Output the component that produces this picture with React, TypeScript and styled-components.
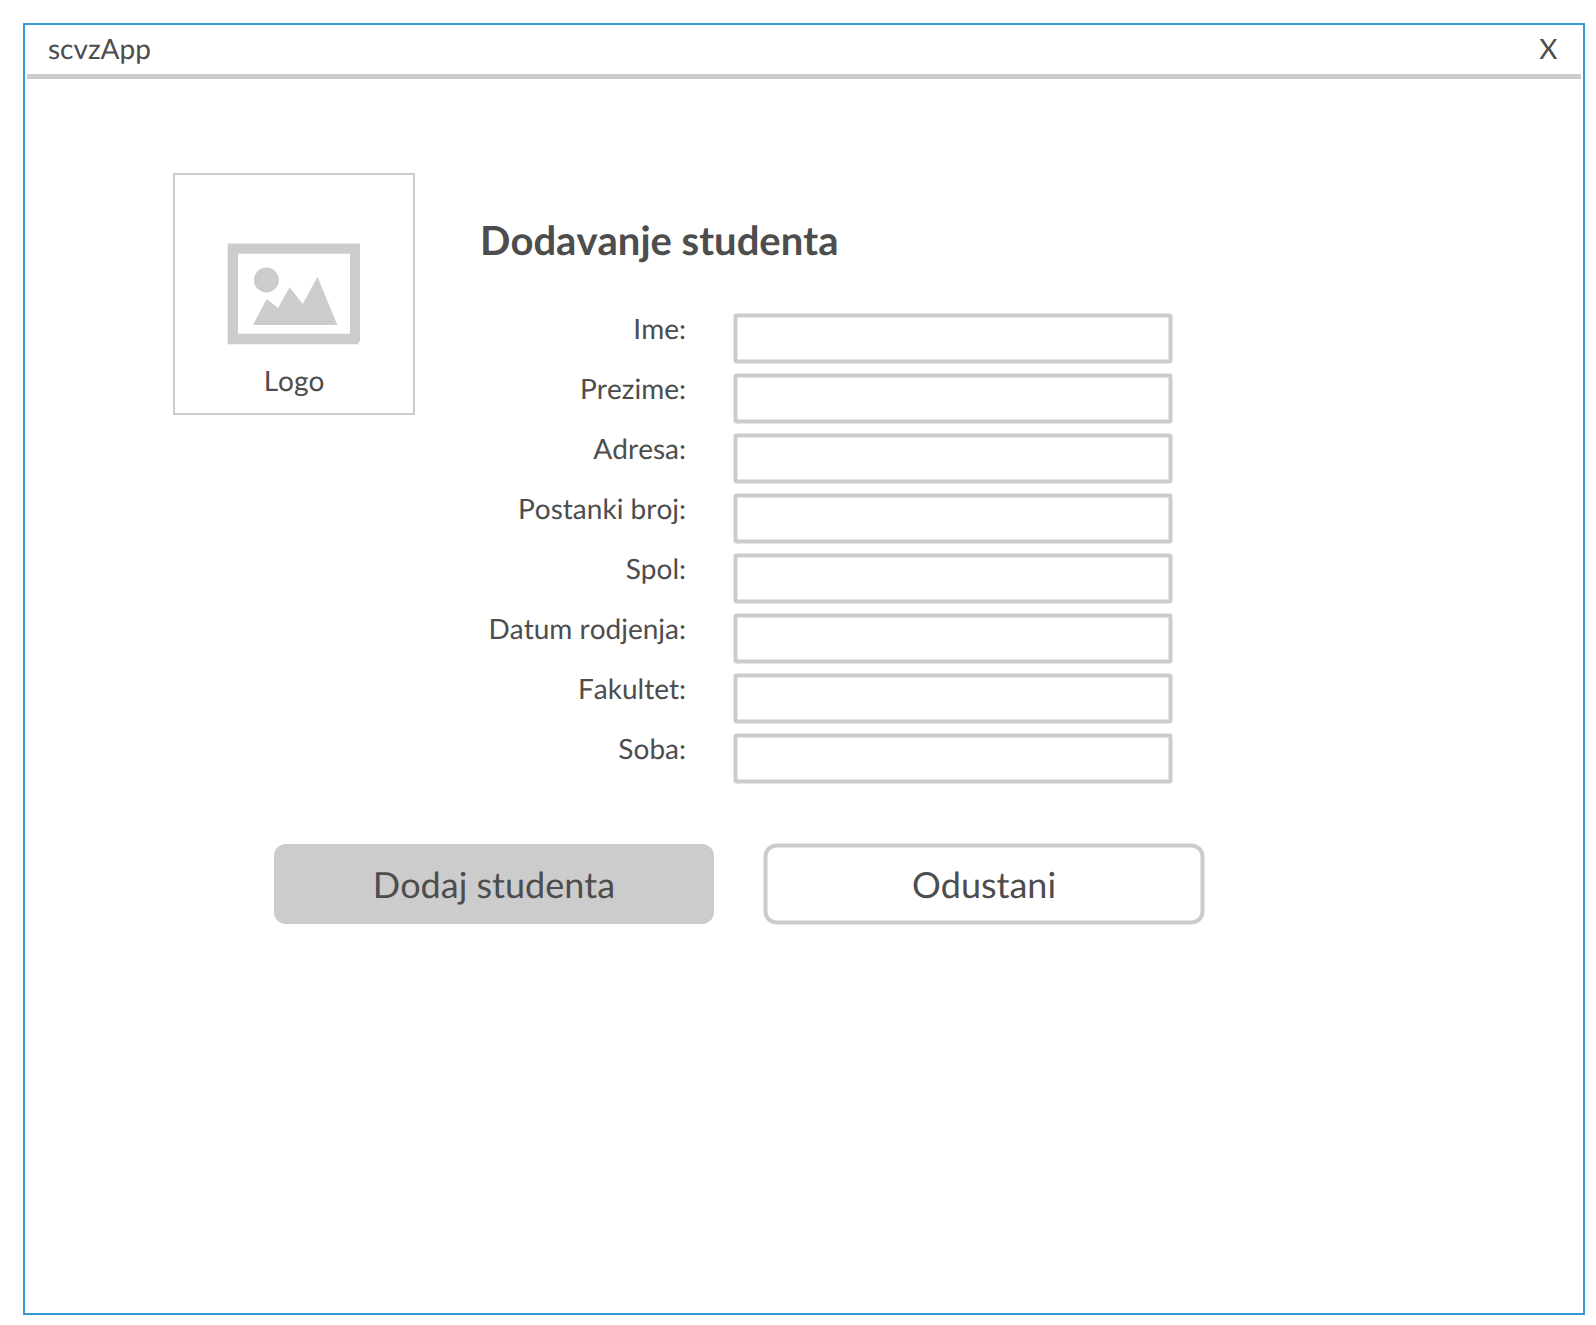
import React from "react";
import styled, { createGlobalStyle } from "styled-components";

const line = "#cccccc";
const ink = "#4d4d4d";

const GlobalStyle = createGlobalStyle`
  *, *::before, *::after { box-sizing: border-box; }
  body {
    margin: 0;
    background: #ffffff;
    color: ${ink};
    font-family: Lato, "Open Sans", sans-serif;
    font-size: 28px;
    font-kerning: none;
    line-height: 34px;
    text-rendering: geometricPrecision;
  }
  button { text-rendering: inherit; }
`;

const Page = styled.div`
  padding: 23px 11px 10px 23px;
  height: 1325px;
`;

const Window = styled.main`
  display: flex;
  flex-direction: column;
  height: 1292px;
  border: 2px solid #3498db;
`;

const TitleBar = styled.header`
  display: flex;
  justify-content: space-between;
  height: 54px;
  margin: 0 2px;
  padding: 6px 23.6px 0 21px;
  border-bottom: 5px solid ${line};
`;

const WindowTitle = styled.span``;

const CloseButton = styled.button`
  padding: 0;
  height: 34px;
  border: 0;
  background: none;
  color: inherit;
  font: inherit;
`;

const Content = styled.section`
  display: flex;
  align-items: flex-start;
  gap: 65px;
  padding: 94px 0 0 148px;
`;

const LogoCard = styled.div`
  display: flex;
  flex-direction: column;
  align-items: center;
  width: 242px;
  height: 242px;
  padding-top: 68px;
  border: 2px solid ${line};
`;

const LogoImage = styled.svg`
  display: block;
  width: 134px;
  height: 102px;
`;

const LogoCaption = styled.span`
  margin-top: 18px;
`;

const Form = styled.form`
  width: 692px;
  padding-top: 43px;
`;

const Heading = styled.h1`
  margin: 0 0 49px;
  font-size: 40px;
  font-weight: 700;
  line-height: 48px;
`;

const Fields = styled.div`
  display: flex;
  flex-direction: column;
  gap: 10px;
`;

const Field = styled.label`
  display: flex;
  justify-content: space-between;
  height: 50px;
`;

const FieldLabel = styled.span`
  width: 206px;
  margin-top: -2px;
  text-align: right;
  white-space: nowrap;
`;

const TextInput = styled.input`
  width: 439px;
  height: 50px;
  padding: 0 12px;
  border: 4px solid ${line};
  border-radius: 3px;
  background: transparent;
  color: inherit;
  font: inherit;
  outline: none;
  transform: translate(0.5px, 0.5px);
`;

const Actions = styled.footer`
  display: flex;
  gap: 49px;
  padding: 60px 0 0 249px;
`;

const ActionButton = styled.button<{ $primary?: boolean }>`
  width: ${(p) => (p.$primary ? 440 : 441)}px;
  height: ${(p) => (p.$primary ? 80 : 81)}px;
  margin-top: ${(p) => (p.$primary ? 1 : 0)}px;
  padding: ${(p) => (p.$primary ? "0" : "0 0 1px")};
  border: ${(p) => (p.$primary ? "0" : `4px solid ${line}`)};
  border-radius: ${(p) => (p.$primary ? 12 : 13)}px;
  background: ${(p) => (p.$primary ? line : "transparent")};
  color: inherit;
  font: 400 36px/44px Lato, "Open Sans", sans-serif;
  font-kerning: none;
  transform: ${(p) => (p.$primary ? "none" : "translate(0.5px, 0.5px)")};
`;

const fields = [
  "Ime:",
  "Prezime:",
  "Adresa:",
  "Postanki broj:",
  "Spol:",
  "Datum rodjenja:",
  "Fakultet:",
  "Soba:",
];

export default function App() {
  return (
    <Page>
      <GlobalStyle />
      <Window>
        <TitleBar>
          <WindowTitle>scvzApp</WindowTitle>
          <CloseButton type="button">X</CloseButton>
        </TitleBar>
        <Content>
          <LogoCard>
            <LogoImage viewBox="227 243 134 102" fill={line} aria-hidden="true">
              <path
                fillRule="evenodd"
                d="M227.7 243.6H360V341.7H358.5V344.3H227.7ZM238 253.8V333.8H350V253.8Z"
              />
              <circle cx="266.4" cy="280" r="12.5" />
              <path d="M253 325L266.7 299L278 308L289.6 287.3L302.7 304L317.5 276.7L337.3 325Z" />
            </LogoImage>
            <LogoCaption>Logo</LogoCaption>
          </LogoCard>
          <Form>
            <Heading>Dodavanje studenta</Heading>
            <Fields>
              {fields.map((name) => (
                <Field key={name}>
                  <FieldLabel>{name}</FieldLabel>
                  <TextInput type="text" />
                </Field>
              ))}
            </Fields>
          </Form>
        </Content>
        <Actions>
          <ActionButton type="button" $primary>
            Dodaj studenta
          </ActionButton>
          <ActionButton type="button">Odustani</ActionButton>
        </Actions>
      </Window>
    </Page>
  );
}
